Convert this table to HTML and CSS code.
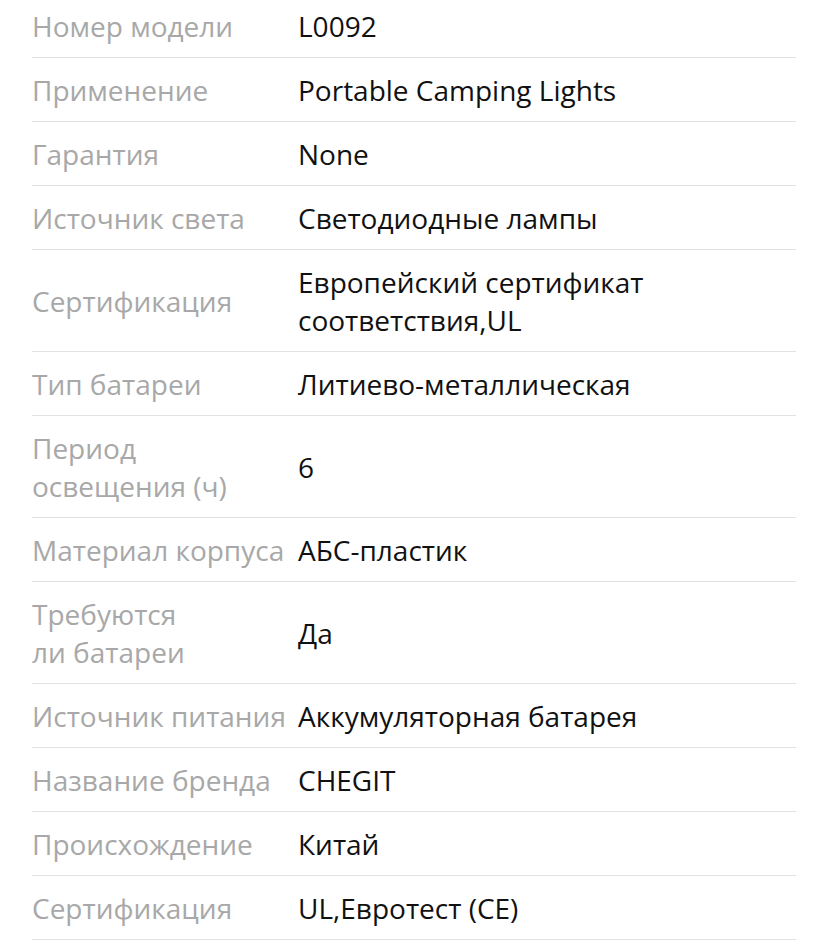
FILE: index.html
```html
<!DOCTYPE html>
<html lang="ru">
<head>
<meta charset="utf-8">
<link rel="stylesheet" href="styles.css">
</head>
<body>
<div class="specs">
  <div class="row"><div class="key">Номер модели</div><div class="val">L0092</div></div>
  <div class="row"><div class="key">Применение</div><div class="val">Portable Camping Lights</div></div>
  <div class="row"><div class="key">Гарантия</div><div class="val">None</div></div>
  <div class="row"><div class="key">Источник света</div><div class="val">Светодиодные лампы</div></div>
  <div class="row"><div class="key">Сертификация</div><div class="val">Европейский сертификат соответствия,UL</div></div>
  <div class="row"><div class="key">Тип батареи</div><div class="val">Литиево-металлическая</div></div>
  <div class="row"><div class="key">Период<br>освещения (ч)</div><div class="val">6</div></div>
  <div class="row"><div class="key">Материал корпуса</div><div class="val">АБС-пластик</div></div>
  <div class="row"><div class="key">Требуются<br>ли батареи</div><div class="val">Да</div></div>
  <div class="row"><div class="key">Источник питания</div><div class="val">Аккумуляторная батарея</div></div>
  <div class="row"><div class="key">Название бренда</div><div class="val">CHEGIT</div></div>
  <div class="row"><div class="key">Происхождение</div><div class="val">Китай</div></div>
  <div class="row"><div class="key">Сертификация</div><div class="val">UL,Евротест (CE)</div></div>
</div>
</body>
</html>
```
FILE: styles.css
```css
html, body {
  margin: 0;
  padding: 0;
  background: #fff;
}
body {
  font-family: "Open Sans", "Noto Sans", sans-serif;
  font-size: 28px;
  line-height: 38px;
}
.specs {
  margin: -6px 32px 0 32px;
  width: 764px;
}
.row {
  display: flex;
  align-items: center;
  padding: 13px 0 12px;
  border-bottom: 1px solid #e2e2e2;
}
.key {
  width: 266px;
  flex: none;
  color: #a8a8a8;
}
.val {
  flex: 1;
  color: #111;
  padding-right: 100px;
}
```
